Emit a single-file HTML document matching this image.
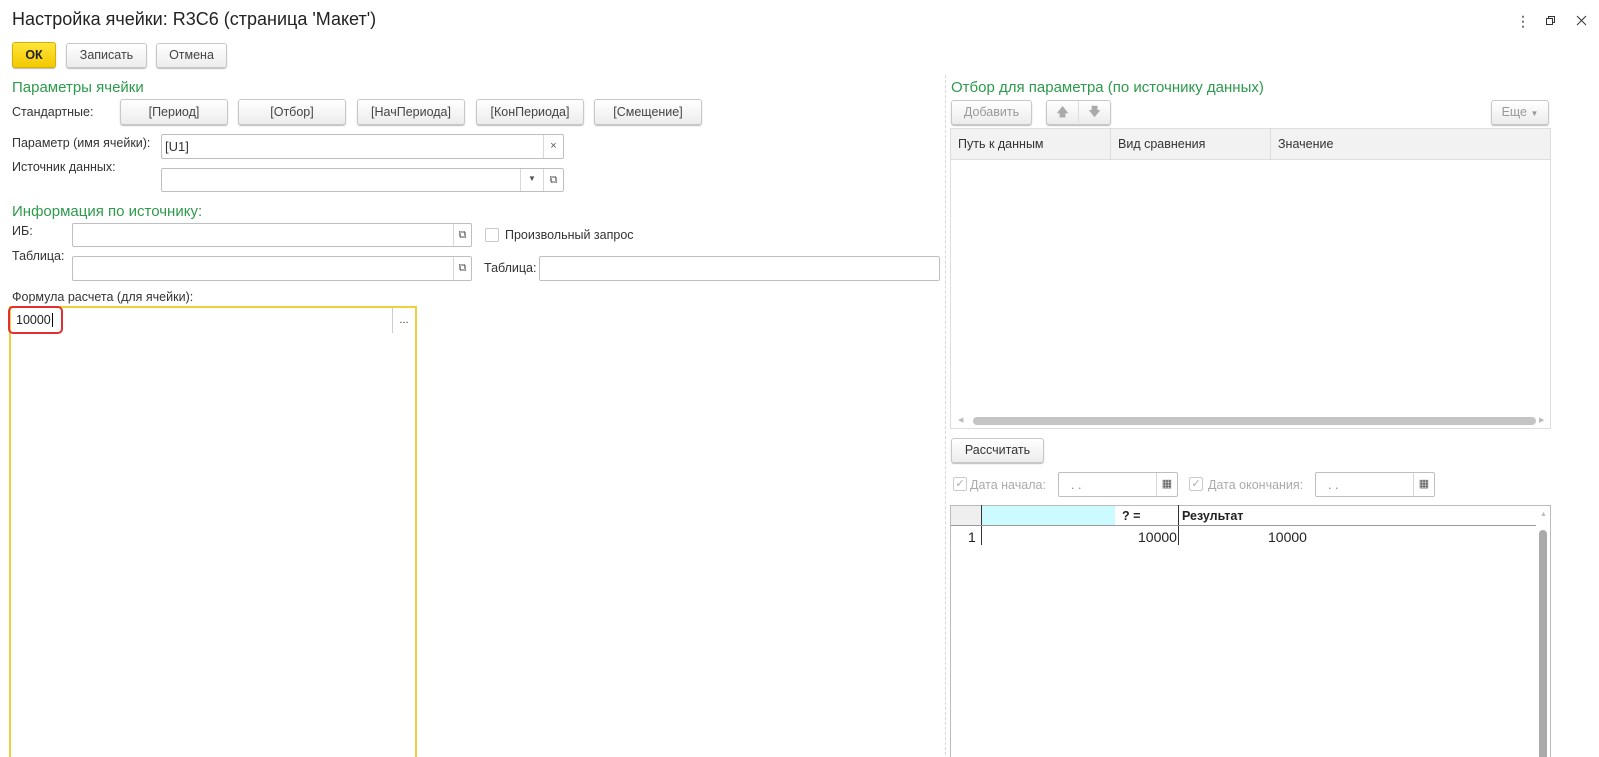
<!DOCTYPE html>
<html><head><meta charset="utf-8"><style>
*{box-sizing:border-box;margin:0;padding:0}
html,body{width:1599px;height:757px;overflow:hidden}
body{background:#fff;font-family:"Liberation Sans",sans-serif;font-size:12.5px;color:#333;position:relative}
.a{position:absolute;white-space:nowrap}
.btn{position:absolute;border:1px solid #c8c8c8;border-radius:3px;background:linear-gradient(#fff,#ececec);box-shadow:0 1px 1px #bbb;text-align:center;color:#444}
.inp{position:absolute;border:1px solid #bfbfbf;border-radius:2px;background:#fff}
.seg{position:absolute;top:0;bottom:0;border-left:1px solid #d8d8d8;text-align:center;color:#555;font-size:11px}
.g{color:#2d9a4c;font-size:15px}
.cb{position:absolute;width:14px;height:14px;border:1px solid #c8c8c8;border-radius:2px;background:#fff}
</style></head><body>
<div class="a" style="left:12px;top:9px;font-size:18px;color:#222">Настройка ячейки: R3C6 (страница 'Макет')</div>
<div class="a" style="left:1516px;top:13px;color:#777;font-size:14px;font-weight:bold">⋮</div>
<svg class="a" style="left:1546px;top:16px" width="9" height="9"><rect x="0.5" y="2.5" width="6" height="6" fill="none" stroke="#333"/><path d="M2.5 2.5V0.5H8.5V6.5H6.5" fill="none" stroke="#333"/></svg>
<svg class="a" style="left:1576px;top:15px" width="11" height="11"><path d="M1 1L10 10M10 1L1 10" stroke="#333"/></svg>

<div class="btn" style="left:12px;top:42px;width:44px;height:26px;background:linear-gradient(#ffe53a,#f4c800);border-color:#d4b000;font-weight:bold;color:#222;line-height:24px">ОК</div>
<div class="btn" style="left:66px;top:43px;width:81px;height:25px;line-height:23px">Записать</div>
<div class="btn" style="left:156px;top:43px;width:71px;height:25px;line-height:23px">Отмена</div>

<div class="a g" style="left:12px;top:79px">Параметры ячейки</div>
<div class="a" style="left:12px;top:105px">Стандартные:</div>
<div class="btn" style="left:120px;top:99px;width:108px;height:26px;line-height:24px">[Период]</div>
<div class="btn" style="left:238px;top:99px;width:108px;height:26px;line-height:24px">[Отбор]</div>
<div class="btn" style="left:357px;top:99px;width:108px;height:26px;line-height:24px">[НачПериода]</div>
<div class="btn" style="left:476px;top:99px;width:108px;height:26px;line-height:24px">[КонПериода]</div>
<div class="btn" style="left:594px;top:99px;width:108px;height:26px;line-height:24px">[Смещение]</div>

<div class="a" style="left:12px;top:136px">Параметр (имя ячейки):</div>
<div class="inp" style="left:161px;top:134px;width:403px;height:25px"><span class="a" style="left:3px;top:4px;font-size:13px;color:#333">[U1]</span><div class="seg" style="left:381px;width:20px;line-height:23px">×</div></div>
<div class="a" style="left:12px;top:160px">Источник данных:</div>
<div class="inp" style="left:161px;top:168px;width:403px;height:24px"><div class="seg" style="left:358px;width:23px;line-height:20px;font-size:8px">▼</div><div class="seg" style="left:381px;width:20px;line-height:22px">⧉</div></div>

<div class="a g" style="left:12px;top:203px">Информация по источнику:</div>
<div class="a" style="left:12px;top:224px">ИБ:</div>
<div class="inp" style="left:72px;top:223px;width:400px;height:24px"><div class="seg" style="left:380px;width:18px;line-height:22px">⧉</div></div>
<div class="cb" style="left:485px;top:228px"></div>
<div class="a" style="left:505px;top:228px">Произвольный запрос</div>
<div class="a" style="left:12px;top:249px">Таблица:</div>
<div class="inp" style="left:72px;top:256px;width:400px;height:25px"><div class="seg" style="left:380px;width:18px;line-height:23px">⧉</div></div>
<div class="a" style="left:484px;top:261px">Таблица:</div>
<div class="inp" style="left:539px;top:256px;width:401px;height:25px"></div>

<div class="a" style="left:12px;top:290px">Формула расчета (для ячейки):</div>
<div class="a" style="left:9px;top:306px;width:408px;height:480px;border:2px solid #f0cf3e"></div>
<div class="a" style="left:392px;top:308px;width:23px;height:25px;border-left:1px solid #ccc;text-align:center;line-height:24px;font-size:11px">...</div>
<div class="a" style="left:8px;top:306px;width:55px;height:28px;border:2px solid #e03030;border-radius:5px"></div>
<div class="a" style="left:16px;top:313px;color:#222">10000<span style="border-left:1px solid #000;margin-left:1px"></span></div>

<div class="a" style="left:945px;top:75px;height:690px;border-left:1px dashed #d8d8d8"></div>

<div class="a g" style="left:951px;top:79px">Отбор для параметра (по источнику данных)</div>
<div class="btn" style="left:951px;top:100px;width:81px;height:25px;line-height:23px;color:#999">Добавить</div>
<div class="btn" style="left:1046px;top:100px;width:65px;height:25px;color:#aaa;line-height:22px"><span style="display:inline-block;width:32px;border-right:1px solid #ddd">🡅</span><span style="display:inline-block;width:31px">🡇</span></div>
<div class="btn" style="left:1491px;top:100px;width:58px;height:25px;line-height:23px;color:#999">Еще <span style="font-size:8px">▼</span></div>
<div class="a" style="left:950px;top:128px;width:601px;height:301px;border:1px solid #ddd"></div>
<div class="a" style="left:951px;top:129px;width:599px;height:31px;background:#f2f2f2;border-bottom:1px solid #ddd"></div>
<div class="a" style="left:1110px;top:129px;height:31px;border-left:1px solid #ddd"></div>
<div class="a" style="left:1270px;top:129px;height:31px;border-left:1px solid #ddd"></div>
<div class="a" style="left:958px;top:137px">Путь к данным</div>
<div class="a" style="left:1118px;top:137px">Вид сравнения</div>
<div class="a" style="left:1278px;top:137px">Значение</div>
<div class="a" style="left:973px;top:417px;width:563px;height:8px;background:#c4c4c4;border-radius:4px"></div>
<div class="a" style="left:958px;top:416px;font-size:7px;color:#bbb">◀</div>
<div class="a" style="left:1539px;top:416px;font-size:7px;color:#bbb">▶</div>

<div class="btn" style="left:951px;top:438px;width:93px;height:25px;line-height:23px;color:#333">Рассчитать</div>
<div class="cb" style="left:953px;top:477px;border-color:#ccc;color:#aaa;font-size:11px;line-height:12px;text-align:center">✓</div>
<div class="a" style="left:970px;top:478px;color:#aaa">Дата начала:</div>
<div class="inp" style="left:1058px;top:472px;width:120px;height:25px"><span class="a" style="left:12px;top:5px;color:#888">. .</span><div class="seg" style="left:97px;width:21px;line-height:22px">▦</div></div>
<div class="cb" style="left:1189px;top:477px;border-color:#ccc;color:#aaa;font-size:11px;line-height:12px;text-align:center">✓</div>
<div class="a" style="left:1208px;top:478px;color:#aaa">Дата окончания:</div>
<div class="inp" style="left:1315px;top:472px;width:120px;height:25px"><span class="a" style="left:12px;top:5px;color:#888">. .</span><div class="seg" style="left:97px;width:21px;line-height:22px">▦</div></div>

<div class="a" style="left:950px;top:505px;width:601px;height:280px;border:1px solid #bbb"></div>
<div class="a" style="left:951px;top:506px;width:30px;height:20px;background:#efefef"></div>
<div class="a" style="left:981px;top:506px;width:134px;height:20px;background:#ccfbff"></div>
<div class="a" style="left:981px;top:505px;height:40px;border-left:1px solid #333"></div>
<div class="a" style="left:1178px;top:505px;height:40px;border-left:1px solid #333"></div>
<div class="a" style="left:951px;top:525px;width:585px;border-top:1px solid #999"></div>
<div class="a" style="left:1122px;top:509px;font-weight:bold;color:#222">? =</div>
<div class="a" style="left:1182px;top:509px;font-weight:bold;color:#222">Результат</div>
<div class="a" style="left:968px;top:529px;font-size:14px;color:#222">1</div>
<div class="a" style="left:1138px;top:529px;font-size:14px;color:#222">10000</div>
<div class="a" style="left:1268px;top:529px;font-size:14px;color:#222">10000</div>
<div class="a" style="left:1540px;top:511px;font-size:7px;color:#bbb">▲</div>
<div class="a" style="left:1539px;top:530px;width:8px;height:260px;background:#aaa;border-radius:4px"></div>
</body></html>
